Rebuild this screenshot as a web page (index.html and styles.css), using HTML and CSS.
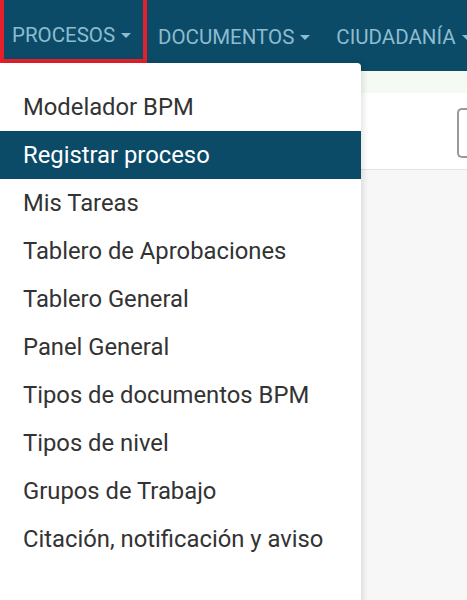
FILE: index.html
```html
<!DOCTYPE html>
<html lang="es">
<head>
<meta charset="utf-8">
<link rel="stylesheet" href="styles.css">
</head>
<body>
<nav class="navbar">
  <div class="nav-item active">PROCESOS<span class="caret"></span></div>
  <div class="nav-item">DOCUMENTOS<span class="caret"></span></div>
  <div class="nav-item">CIUDADANÍA<span class="caret"></span></div>
</nav>
<div class="page">
  <div class="band"></div>
  <div class="toolbar"><div class="field"></div></div>
  <div class="content"></div>
</div>
<ul class="dropdown">
  <li>Modelador BPM</li>
  <li class="selected">Registrar proceso</li>
  <li>Mis Tareas</li>
  <li>Tablero de Aprobaciones</li>
  <li>Tablero General</li>
  <li>Panel General</li>
  <li>Tipos de documentos BPM</li>
  <li>Tipos de nivel</li>
  <li>Grupos de Trabajo</li>
  <li>Citación, notificación y aviso</li>
</ul>
</body>
</html>
```
FILE: styles.css
```css
* { box-sizing: border-box; }
html, body { margin: 0; padding: 0; }
body {
  width: 467px;
  height: 600px;
  overflow: hidden;
  font-family: Roboto, "Liberation Sans", sans-serif;
  background: #f7f7f7;
  position: relative;
}
.navbar {
  height: 71px;
  background: #0b4b68;
  display: flex;
  white-space: nowrap;
}
.nav-item {
  color: #8dbccf;
  font-size: 20.5px;
  height: 63px;
  display: flex;
  align-items: center;
  padding: 11px 15px 0 11px;
  flex: none;
}
.nav-item.active {
  border: 4px solid #e3202b;
  border-top: 0;
  padding-left: 8px;
  padding-right: 10px;
  width: 147px;
}
.caret {
  display: inline-block;
  width: 0; height: 0;
  border-left: 5.5px solid transparent;
  border-right: 5.5px solid transparent;
  border-top: 5px solid currentColor;
  margin-left: 6px;
  margin-top: 1px;
}
.page { display: flex; flex-direction: column; }
.band { height: 22px; background: #f4fbf3; }
.toolbar {
  height: 77px;
  background: #fff;
  border-bottom: 1px solid #e4e4e4;
  display: flex;
  justify-content: flex-end;
  align-items: center;
}
.field {
  width: 10px;
  height: 50px;
  border: 2px solid #999;
  border-right: 0;
  border-radius: 5px 0 0 5px;
  margin-top: 4px;
}
.dropdown {
  position: absolute;
  left: 0;
  top: 63px;
  width: 361px;
  height: 560px;
  margin: 0;
  padding: 20px 0 0;
  list-style: none;
  background: #fff;
  border-radius: 0 4px 0 0;
  box-shadow: 2px 0 6px rgba(0,0,0,0.12);
}
.dropdown li {
  height: 48px;
  display: flex;
  align-items: center;
  padding-left: 23px;
  font-size: 23.8px;
  color: #333;
  white-space: nowrap;
}
.dropdown li.selected {
  background: #0b4b68;
  color: #fff;
}
```
